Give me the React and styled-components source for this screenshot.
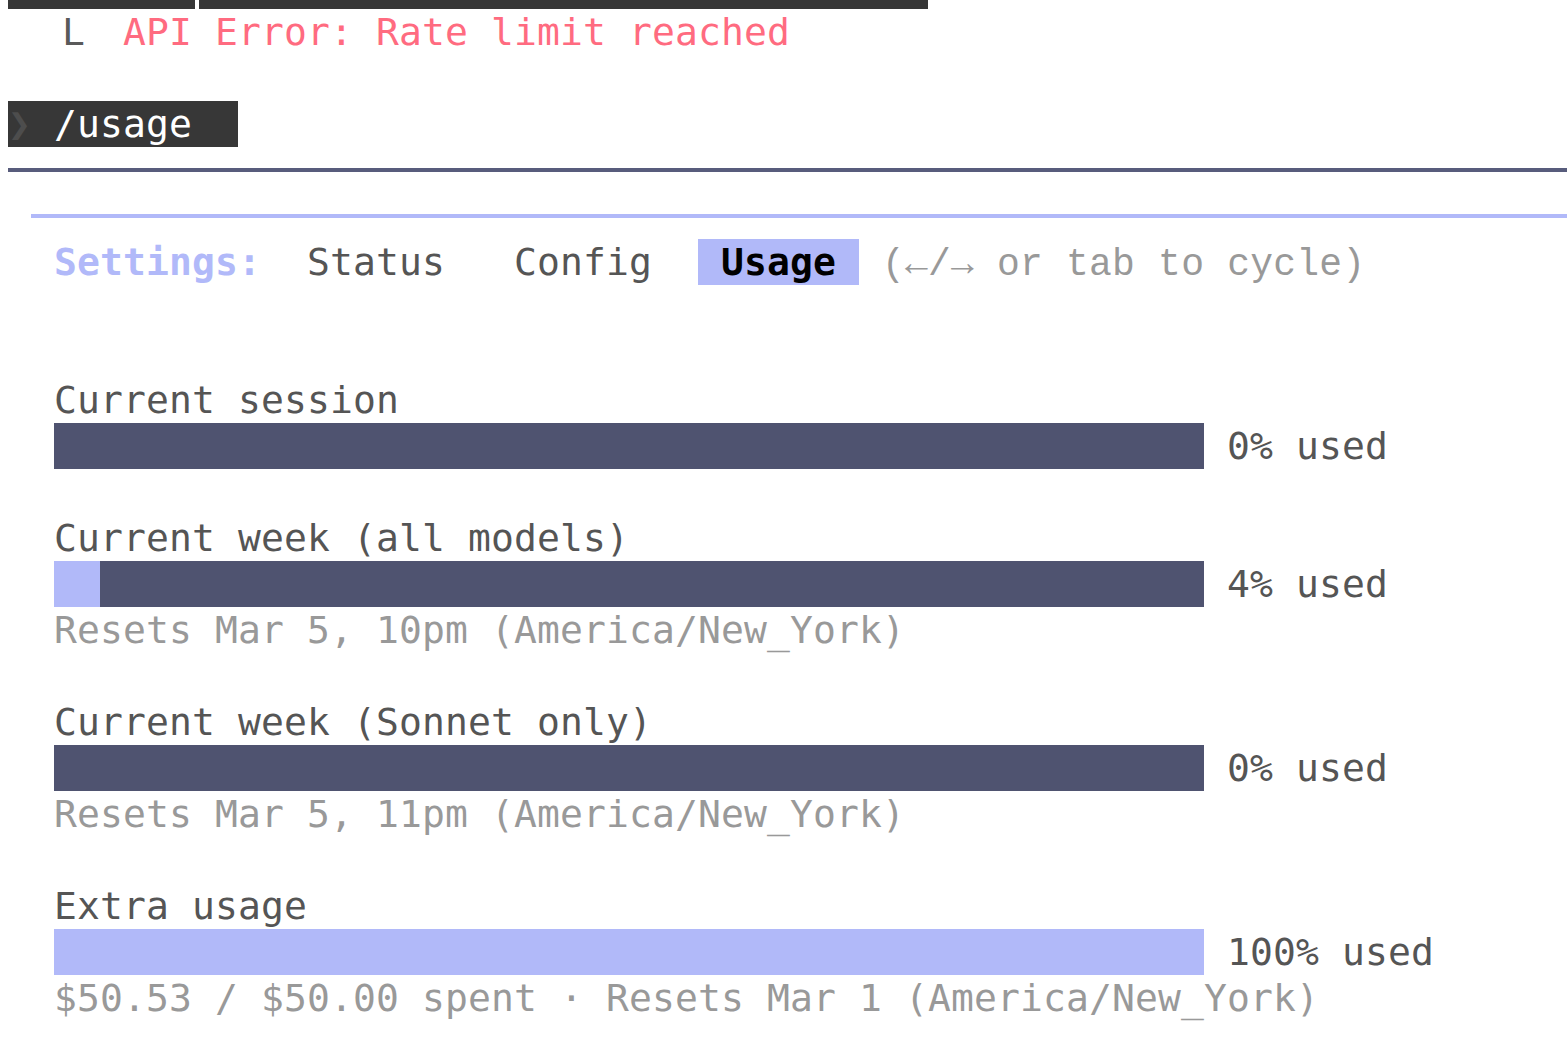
import React from 'react'
import styled, { createGlobalStyle } from 'styled-components'

const CELL = 23
const ROW = 46

const GlobalStyle = createGlobalStyle`
  html, body {
    margin: 0;
    padding: 0;
    background: #ffffff;
  }

  body {
    font-family: 'DejaVu Sans Mono', 'Liberation Mono', monospace;
    font-size: 38px;
    letter-spacing: 0.124px;
    overflow: hidden;
  }
`

const Screen = styled.div`
  display: flex;
  flex-direction: column;
  padding-left: 8px;
  width: 1559px;
`

const TopBar = styled.div`
  display: flex;
  gap: 4px;
  height: 9px;
`

const TopSegment = styled.div`
  background: #373737;
  height: 100%;
  width: ${props => props.width}px;
`

const Row = styled.div`
  align-items: stretch;
  display: flex;
  height: ${ROW}px;
  line-height: ${ROW}px;
  padding-left: ${props => (props.indent || 0) * CELL}px;
  white-space: pre;
`

const Text = styled.span`
  color: ${props => props.color || '#555555'};
  font-weight: ${props => (props.bold ? 700 : 400)};
`

const Branch = styled.span`
  box-sizing: border-box;
  color: #5a5a5a;
  padding-left: 8px;
  width: ${3 * CELL}px;
`

const PromptBox = styled.div`
  background: #373737;
  display: flex;
  width: ${10 * CELL}px;
`

const Chevron = styled.span`
  color: #4d4d4d;
  width: ${2 * CELL}px;
`

const Command = styled.span`
  color: #ffffff;
`

const RuleRow = styled.div`
  align-items: center;
  display: flex;
  height: ${ROW}px;
  padding-left: ${props => (props.indent || 0) * CELL}px;
`

const Rule = styled.div`
  background: ${props => props.color};
  flex: 1;
  height: ${props => props.thickness || 3}px;
`

const TabBar = styled(Row)`
  gap: ${CELL}px;
`

const Tab = styled.span`
  background: ${props => (props.active ? '#b1b9f9' : 'transparent')};
  color: ${props => (props.active ? '#000000' : '#555555')};
  font-weight: ${props => (props.active ? 700 : 400)};
  padding: 0 ${CELL}px;
`

const Hint = styled.span`
  color: #999999;
  font-family: 'Liberation Mono', 'DejaVu Sans Mono', monospace;
  letter-spacing: 0.2px;
  padding-top: 3px;
`

const Bar = styled.div`
  background: #4f5370;
  display: flex;
  width: ${50 * CELL}px;
`

const BarFill = styled.div`
  background: #b1b9f9;
  height: 100%;
`

const BarLabel = styled.span`
  color: #555555;
  padding-left: ${CELL}px;
`

const blocks = [
  { title: 'Current session', pct: 0 },
  {
    title: 'Current week (all models)',
    pct: 4,
    note: 'Resets Mar 5, 10pm (America/New_York)',
  },
  {
    title: 'Current week (Sonnet only)',
    pct: 0,
    note: 'Resets Mar 5, 11pm (America/New_York)',
  },
  {
    title: 'Extra usage',
    pct: 100,
    note: '$50.53 / $50.00 spent · Resets Mar 1 (America/New_York)',
  },
]

const UsageBlock = ({ title, pct, note, last }) => (
  <>
    <Row indent={2}>
      <Text>{title}</Text>
    </Row>
    <Row indent={2}>
      <Bar>
        <BarFill style={{ width: Math.round((pct / 100) * 50) * CELL }} />
      </Bar>
      <BarLabel>{pct}% used</BarLabel>
    </Row>
    {note && (
      <Row indent={2}>
        <Text color="#999999">{note}</Text>
      </Row>
    )}
    {!last && <Row />}
  </>
)

const App = () => (
  <>
    <GlobalStyle />
    <Screen>
      <TopBar>
        <TopSegment width={187} />
        <TopSegment width={729} />
      </TopBar>
      <Row indent={2}>
        <Branch>L</Branch>
        <Text color="#ff6b80">API Error: Rate limit reached</Text>
      </Row>
      <Row />
      <Row>
        <PromptBox>
          <Chevron>❯</Chevron>
          <Command>/usage</Command>
        </PromptBox>
      </Row>
      <RuleRow>
        <Rule color="#585c7c" thickness={4} />
      </RuleRow>
      <RuleRow indent={1}>
        <Rule color="#b1b9f9" thickness={4} />
      </RuleRow>
      <TabBar indent={2}>
        <Text color="#b1b9f9" bold>
          Settings:
        </Text>
        <Tab>Status</Tab>
        <Tab>Config</Tab>
        <Tab active>Usage</Tab>
        <Hint>(←/→ or tab to cycle)</Hint>
      </TabBar>
      <Row />
      <Row />
      {blocks.map((b, i) => (
        <UsageBlock key={b.title} {...b} last={i === blocks.length - 1} />
      ))}
    </Screen>
  </>
)

export default App
